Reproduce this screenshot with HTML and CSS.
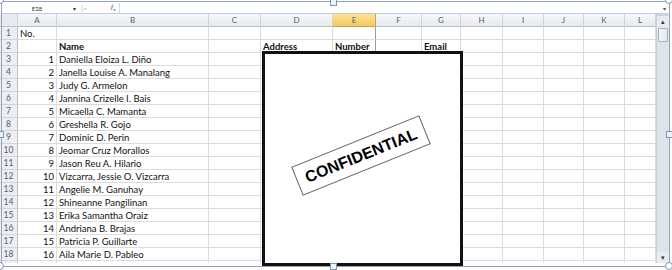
FILE: index.html
```html
<!DOCTYPE html>
<html>
<head>
<meta charset="utf-8">
<link rel="stylesheet" href="styles.css">
</head>
<body>
<div class="frame">
  <div class="fbar">
    <div class="namebox">E28</div>
    <div class="nb-arrow">▾</div>
    <div class="nb-sep">(=</div>
    <div class="fx"><i>f</i><sub>x</sub></div>
    <div class="finput"></div>
    <div class="f-arrow">▾</div>
  </div>
  <div class="sheet">
    <div class="grid">
      <div class="ch corner"></div>
      <div class="ch">A</div><div class="ch">B</div><div class="ch">C</div><div class="ch">D</div><div class="ch sel">E</div><div class="ch">F</div><div class="ch">G</div><div class="ch">H</div><div class="ch">I</div><div class="ch">J</div><div class="ch">K</div><div class="ch">L</div>

      <div class="rh">1</div><div class="c">No.</div><div class="c"></div><div class="c"></div><div class="c"></div><div class="c ecol"></div><div class="c"></div><div class="c"></div><div class="c"></div><div class="c"></div><div class="c"></div><div class="c"></div><div class="c"></div>
      <div class="rh">2</div><div class="c"></div><div class="c b">Name</div><div class="c"></div><div class="c b">Address</div><div class="c b ecol">Number</div><div class="c"></div><div class="c b">Email</div><div class="c"></div><div class="c"></div><div class="c"></div><div class="c"></div><div class="c"></div>
    </div>
    <div class="grid body" id="rows"></div>
    <div class="vscroll">
      <div class="sb-up">▴</div>
      <div class="sb-thumb"></div>
      <div class="sb-track"></div>
      <div class="sb-down">▾</div>
    </div>
  </div>
  <div class="conf">
    <div class="stamp">CONFIDENTIAL</div>
  </div>
  <div class="handle h-tm"></div>
  <div class="handle h-ml"></div>
  <div class="handle h-mr"></div>
  <div class="handle h-bm"></div>
  <div class="handle round h-tl"></div>
  <div class="handle round h-tr"></div>
  <div class="handle round h-bl"></div>
  <div class="handle round h-br"></div>
</div>
<script src="script.js"></script>
</body>
</html>
```

FILE: script.js
```js
var names = ["Daniella Eloiza L. Diño","Janella Louise A. Manalang","Judy G. Armelon","Jannina Crizelle I. Bais","Micaella C. Mamanta","Greshella R. Gojo","Dominic D. Perin","Jeomar Cruz Morallos","Jason Reu A. Hilario","Vizcarra, Jessie O. Vizcarra","Angelie M. Ganuhay","Shineanne Pangilinan","Erika Samantha Oraiz","Andriana B. Brajas","Patricia P. Guillarte","Aila Marie D. Pableo","Factoriza, Jaira C."];
var g = document.getElementById("rows");
var html = "";
for (var i = 0; i < names.length; i++) {
  html += '<div class="rh">' + (i + 3) + '</div>';
  html += '<div class="c r">' + (i + 1) + '</div>';
  html += '<div class="c">' + names[i] + '</div>';
  for (var k = 0; k < 10; k++) {
    html += '<div class="c"></div>';
  }
}
g.innerHTML = html;
```

FILE: styles.css
```css
html, body { margin: 0; padding: 0; background: #fff; }
.frame {
  position: relative;
  width: 672px;
  height: 270px;
  overflow: hidden;
  font-family: Lato, "Liberation Sans", sans-serif;
}
.frame::before {
  content: "";
  position: absolute;
  left: 1px; top: 1px; width: 667px; height: 264px;
  border: 1px solid #8ea4bf;
  z-index: 5;
  pointer-events: none;
}
.fbar {
  display: flex;
  height: 10px;
  margin: 3px 4px 0 1px;
  border-bottom: 1px solid #c5ccd6;
  align-items: center;
  font-size: 6px;
  color: #333;
}
.namebox { width: 72px; text-align: center; font-size: 6px; }
.nb-arrow { width: 6px; font-size: 6px; color: #333; }
.nb-sep { width: 30px; color: #bbb; font-size: 7px; padding-left: 2px; }
.fx { width: 8px; font-size: 7px; font-family: "Liberation Serif", serif; color: #333; }
.fx sub { font-size: 5px; }
.finput { flex: 1; height: 10px; border-left: 1px solid #d3d8e0; }
.f-arrow { width: 8px; font-size: 6px; color: #555; text-align: center; }

.sheet { position: relative; height: 249px; overflow: hidden; }
.grid {
  display: grid;
  grid-template-columns: 18px 39px 152px 52px 72px 43px 46px 39px 42px 41px 40px 41px 31px;
  font-size: 9.5px;
}
.grid.body { grid-auto-rows: 13px; }
.grid > div { box-sizing: border-box; white-space: nowrap; overflow: hidden; }
.ch {
  height: 13px;
  background: linear-gradient(#f6f7f9, #e7eaee);
  border-right: 1px solid #d0d5dc;
  border-bottom: 1px solid #b8c0cb;
  color: #50607a;
  font-size: 8px;
  text-align: center;
  line-height: 12px;
}
.ch.sel { background: linear-gradient(#fbe39a, #f4c85c); border-right-color: #c9a350; border-bottom-color: #c9a350; }
.ch.corner { background: #e7eaee; }
.rh {
  height: 13px;
  background: #eceef1;
  border-right: 1px solid #b8c0cb;
  border-bottom: 1px solid #d0d5dc;
  color: #50607a;
  font-size: 8.5px;
  text-align: center;
  line-height: 13px;
}
.c {
  height: 13px;
  border-right: 1px solid #dcdcdc;
  border-bottom: 1px solid #dcdcdc;
  color: #111;
  line-height: 13px;
  padding: 0 2px;
}
.c.ecol { border-right: 1px solid #9a9a9a; }
.c.r { text-align: right; }
.c.b { font-weight: bold; }

.conf {
  position: absolute;
  left: 262px;
  top: 51px;
  width: 201px;
  height: 215px;
  box-sizing: border-box;
  border: 3px solid #111;
  background: #fff;
  z-index: 7;
}
.stamp {
  position: absolute;
  left: 27px;
  top: 86px;
  width: 138px;
  height: 31px;
  box-sizing: border-box;
  border: 1px solid #666;
  transform: rotate(-22deg);
  font-family: "Liberation Sans", Arial, sans-serif;
  font-weight: bold;
  font-size: 16px;
  color: #000;
  display: flex;
  align-items: center;
  justify-content: center;
}

.vscroll {
  position: absolute;
  left: 656px;
  top: 0;
  width: 12px;
  height: 249px;
  background: #dfe4ea;
  border-left: 1px solid #c9d0d8;
  display: flex;
  flex-direction: column;
  z-index: 3;
}
.sb-up, .sb-down { height: 11px; font-size: 7px; color: #333; text-align: center; line-height: 11px; background: #e8ecf1; }
.sb-up { border-top: 2px solid #cdd4dc; }
.sb-thumb { height: 12px; margin: 1px 1px; background: linear-gradient(90deg, #f4f6f8, #e3e7ec); border: 1px solid #a7b2bf; border-radius: 1px; }
.sb-track { flex: 1; }

.handle {
  position: absolute;
  width: 5px; height: 5px;
  background: #eef3f9;
  border: 1px solid #7d98b8;
  z-index: 8;
}
.handle.round { border-radius: 50%; width: 6px; height: 6px; background: #fff; }
.h-tm { left: 330px; top: -1px; }
.h-bm { left: 330px; top: 263px; }
.h-ml { left: -3px; top: 131px; }
.h-mr { left: 666px; top: 131px; }
.h-tl { left: -4px; top: -4px; }
.h-tr { left: 665px; top: -4px; }
.h-bl { left: -4px; top: 262px; }
.h-br { left: 665px; top: 262px; }
```
